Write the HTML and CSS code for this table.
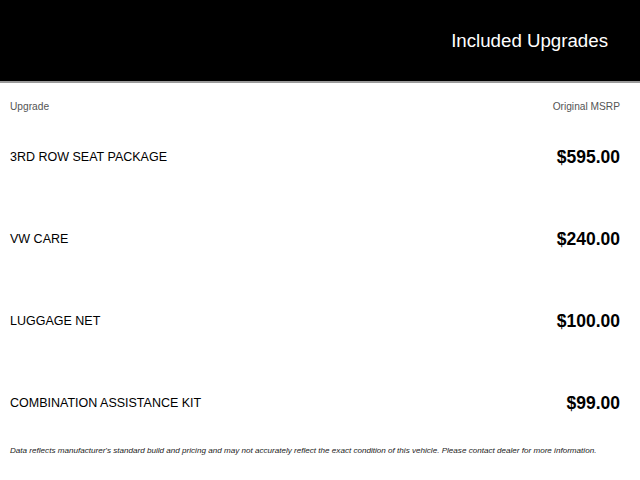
FILE: index.html
```html
<!DOCTYPE html>
<html>
<head>
<meta charset="utf-8">
<link rel="stylesheet" href="styles.css">
</head>
<body>
<header class="hero">
  <h1 class="hero-title">Included Upgrades</h1>
</header>
<main class="content">
  <div class="col-head">
    <span>Upgrade</span>
    <span>Original MSRP</span>
  </div>
  <ul class="list">
    <li class="item"><span class="name">3RD ROW SEAT PACKAGE</span><span class="price">$595.00</span></li>
    <li class="item"><span class="name">VW CARE</span><span class="price">$240.00</span></li>
    <li class="item"><span class="name">LUGGAGE NET</span><span class="price">$100.00</span></li>
    <li class="item"><span class="name">COMBINATION ASSISTANCE KIT</span><span class="price">$99.00</span></li>
  </ul>
  <p class="note">Data reflects manufacturer's standard build and pricing and may not accurately reflect the exact condition of this vehicle. Please contact dealer for more information.</p>
</main>
</body>
</html>
```

FILE: styles.css
```css
html, body {
  margin: 0;
  padding: 0;
  background: #fff;
  font-family: "Liberation Sans", Arial, sans-serif;
  color: #000;
}
.hero {
  background: #000;
  height: 81px;
  border-bottom: 2px solid #9a9a9a;
  display: flex;
  align-items: center;
  justify-content: flex-end;
  padding-right: 32px;
}
.hero-title {
  margin: 0;
  color: #fff;
  font-weight: 400;
  font-size: 18.7px;
  padding-top: 1px;
}
.content {
  padding: 0 20px 0 10px;
}
.col-head {
  display: flex;
  justify-content: space-between;
  font-size: 10.2px;
  color: #555;
  height: 46px;
  align-items: center;
}
.list {
  list-style: none;
  margin: 0;
  padding: 0;
}
.item {
  display: flex;
  justify-content: space-between;
  align-items: center;
  height: 82px;
}
.item:first-child {
  margin-top: -13px;
}
.name {
  font-size: 12.5px;
}
.price {
  font-size: 17.5px;
  font-weight: 700;
}
.note {
  margin: 2px 0 0;
  font-size: 8.1px;
  font-style: italic;
  color: #222;
}
```
